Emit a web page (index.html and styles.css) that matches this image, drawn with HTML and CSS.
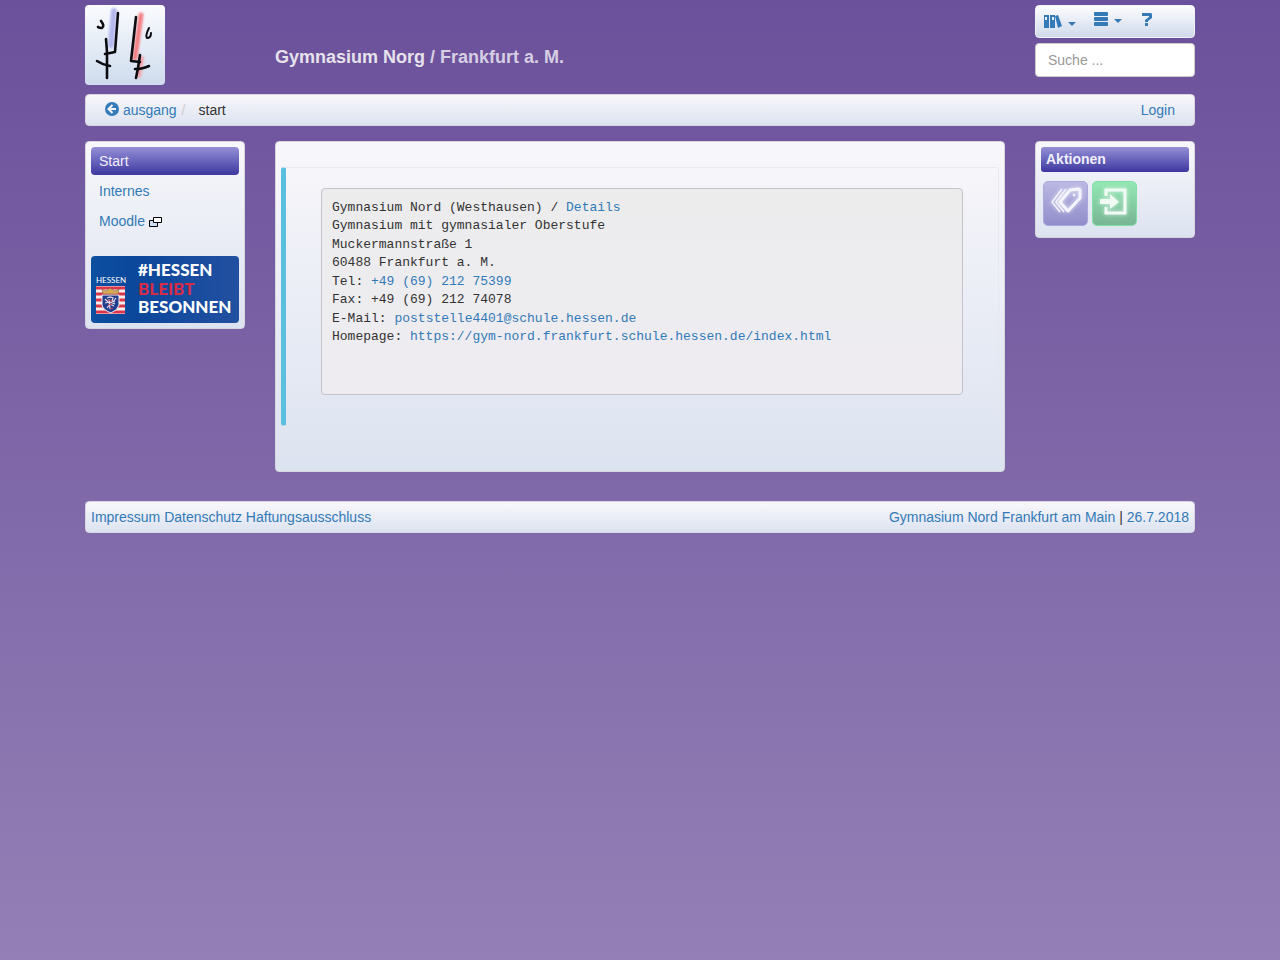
FILE: index.html
```html
<!DOCTYPE html>
<html lang="de">

<head>
  <meta charset="UTF-8">
  <meta name="viewport" content="width=device-width, initial-scale=1.0">
  <title>Gymnasium Nord / Frankfurt a. M.</title>
  <link rel="stylesheet" href="styles.css">
</head>

<body>
  <div class="container">
    <header class="row header">
      <div class="side">
        <a class="logo" href="#" aria-label="Startseite">
          <svg viewBox="0 0 80 80" width="80" height="80" fill="none" stroke-linecap="round" stroke-linejoin="round">
            <defs>
              <filter id="soft" x="-100%" y="-20%" width="300%" height="140%"><feGaussianBlur stdDeviation="1.2"/></filter>
            </defs>
            <g filter="url(#soft)">
              <path d="M29 6 L26 40" stroke="#b5b8ee" stroke-width="6"/>
              <path d="M56 10 L50 53" stroke="#f27f84" stroke-width="5"/>
              <path d="M57 53 L54 71" stroke="#f6a3a8" stroke-width="4"/>
            </g>
            <g stroke="#0b0b10" stroke-width="2.6">
              <path d="M33 8 L30 47 L20 49"/>
              <path d="M21 34 L22 47 L22 73"/>
              <path d="M12 56 Q18 60 25 61"/>
              <path d="M51 12 L46 56 L55 57"/>
              <path d="M55 50 L53 63 L51 73"/>
              <path d="M50 64 Q58 64 64 61"/>
              <path d="M16 16 Q20 21 17 23 Q14 23 13 22"/>
              <path d="M64 23 Q60 31 62 33 Q66 33 66 28" stroke-width="2"/>
            </g>
          </svg>
        </a>
      </div>
      <h1 class="title">Gymnasium Norg <span>/ Frankfurt a. M.</span></h1>
      <div class="side tools">
        <nav class="box toolbar">
          <button type="button" aria-label="Bibliothek">
            <svg viewBox="0 0 18 13" width="18" height="13" fill="#337ab7"><path fill-rule="evenodd" d="M0 0h5v13H0zM1 2h2v3H1zM6 0h5v13H6zM8 2h2v3H8z"/><path d="M11 1l3-1 4 11-4 2z"/></svg>
            <i class="caret"></i>
          </button>
          <button type="button" aria-label="Menü">
            <svg viewBox="0 0 14 14" width="14" height="14" fill="#337ab7"><rect width="14" height="4" rx="1"/><rect y="5" width="14" height="4" rx="1"/><rect y="10" width="14" height="4" rx="1"/></svg>
            <i class="caret"></i>
          </button>
          <button type="button" aria-label="Hilfe">
            <svg viewBox="0 0 10 14" width="10" height="14" fill="#337ab7"><path d="M0 1h9l1 1v4L6 9v1H3V8l4-3V4H0zM3 11h3v3H3z"/></svg>
          </button>
        </nav>
        <input class="search" type="text" placeholder="Suche ..." aria-label="Suche">
      </div>
    </header>

    <nav class="box bar breadcrumb">
      <div>
        <a href="#"><svg viewBox="0 0 14 14" width="14" height="14"><circle cx="7" cy="7" r="7" fill="#337ab7"/><path d="M11 7H4M7.5 3L3.500 7l4 4" fill="none" stroke="#f3f3f9" stroke-width="2"/></svg> ausgang</a><span class="sep">/</span><span>start</span>
      </div>
      <a href="#">Login</a>
    </nav>

    <div class="row content">
      <aside class="side box">
        <ul class="menu">
          <li><a class="active" href="#">Start</a></li>
          <li><a href="#">Internes</a></li>
          <li><a href="#">Moodle
            <svg viewBox="0 0 13 10" width="13" height="10" stroke="#000"><path d="M.5 3.500h8v6h-8z" fill="#cfdcf5"/><path d="M4.500 .5h8v5h-8z" fill="#fff"/></svg></a></li>
        </ul>
        <a class="banner" href="#">
          <svg viewBox="0 0 148 67" font-family="Lato, sans-serif">
            <defs>
              <linearGradient id="blue"><stop offset="0" stop-color="#0d4fa0"/><stop offset=".3" stop-color="#0b479b"/><stop offset="1" stop-color="#2350a0"/></linearGradient>
            </defs>
            <rect width="148" height="67" fill="url(#blue)"/>
            <text x="5" y="27" font-size="8" fill="#fff">HESSEN</text>
            <rect x="5" y="30" width="29" height="28" fill="#f4eeee"/>
            <path d="M5 32h29M5 38h29M5 44h29M5 50h29M5 56h29" stroke="#d9364a" stroke-width="3"/>
            <path d="M11 39h17v10q-1 5-8 8-8-3-9-8z" fill="#203e8d" stroke="#f2eef3"/>
            <path d="M12 38l-1-5 4 2 4-3 5 3 4-2-1 5z" fill="#d9a957" stroke="#76513c" stroke-width=".5"/>
            <path d="M16 42l3-1 3 1-1 3 3 1M14 47l5-1 5 2M16 52l3-4 4 2M18 43l1 10M14 43l3 3M25 42l-3 4" fill="none" stroke="#e9d9e4" stroke-width="1.200"/>
            <path d="M17 44l4 1M17 49l4-1M19 53l3-1" stroke="#cf3d50"/>
            <g font-size="17" font-weight="900">
              <text x="47" y="20" fill="#fff">#HESSEN</text>
              <text x="47" y="39" fill="#d62d46">BLEIBT</text>
              <text x="47" y="57" fill="#fff">BESONNEN</text>
            </g>
          </svg>
        </a>
      </aside>

      <main class="box main">
        <div class="callout">
          <pre>Gymnasium Nord (Westhausen) / <a href="#">Details</a>
Gymnasium mit gymnasialer Oberstufe
Muckermannstraße 1
60488 Frankfurt a. M.
Tel: <a href="#">+49 (69) 212 75399</a>
Fax: +49 (69) 212 74078
E-Mail: <a href="#">poststelle4401@schule.hessen.de</a>
Homepage: <a href="#">https://gym-nord.frankfurt.schule.hessen.de/index.html</a>


</pre>
        </div>
      </main>

      <aside class="side box">
        <h2 class="heading">Aktionen</h2>
        <div class="actions">
          <button class="tags" type="button" aria-label="Tags">
            <svg viewBox="0 0 43 43" width="43" height="43" fill="none" stroke="#f4f4fd"><path d="M16 20L26 8l9-1 1 1v8L24 29z" stroke-width="3" stroke-linejoin="round"/><path d="M22 7L12 20l8 10M18 7L8 20l8 10" stroke-width="1.500"/><circle cx="30" cy="13" r="1" fill="#f4f4fd"/></svg>
          </button>
          <button class="enter" type="button" aria-label="Anmelden">
            <svg viewBox="0 0 43 43" width="43" height="43"><path d="M13 14V8h19v23H13v-6" fill="none" stroke="#f1fbf5" stroke-width="3"/><path d="M7 17h10v-5l9 8-9 7v-5H7z" fill="#f1fbf5"/></svg>
          </button>
        </div>
      </aside>
    </div>

    <footer class="box bar">
      <div><a href="#">Impressum</a> <a href="#">Datenschutz</a> <a href="#">Haftungsausschluss</a></div>
      <div><a href="#">Gymnasium Nord Frankfurt am Main</a> | <a href="#">26.7.2018</a></div>
    </footer>
  </div>
</body>

</html>
```
FILE: styles.css
```css
* {
  box-sizing: border-box;
}
html {
  min-height: 100%;
  background: linear-gradient(#6b509b, #9480b6);
}
body {
  margin: 0;
  font: 14px/20px "Liberation Sans", Arial, sans-serif;
  color: #333;
}
a {
  color: #337ab7;
  text-decoration: none;
}
button {
  font: inherit;
  cursor: pointer;
}
.container {
  max-width: 1140px;
  margin: 0 auto;
  padding: 5px 15px;
}
.row {
  display: grid;
  grid-template-columns: 160px 1fr 160px;
  gap: 30px;
  align-items: start;
}
.box {
  padding: 5px;
  border: 1px solid #d8d5df;
  border-radius: 4px;
  background: linear-gradient(#f8f7fb, #dce3f0);
}

/* header */
.header {
  min-height: 80px;
}
.logo {
  display: block;
  width: 80px;
  height: 80px;
  border-radius: 4px;
  background: linear-gradient(#fafbfe, #cfdcee);
}
.logo svg {
  display: block;
}
.title {
  margin: 0;
  padding-top: 42px;
  font-size: 18px;
  line-height: 20px;
  color: #e6e2ec;
}
.title span {
  color: #d6cfe3;
}
.tools {
  display: flex;
  flex-direction: column;
  gap: 5px;
}
.toolbar {
  display: flex;
  gap: 18px;
  height: 33px;
  padding: 0 8px;
  border-color: #f0f2f8;
  background: linear-gradient(#fcfcfe, #d0daeb);
}
.toolbar button {
  display: flex;
  align-items: center;
  gap: 6px;
  padding: 0;
  border: 0;
  background: none;
}
.toolbar button:last-child {
  padding-left: 2px;
}
.toolbar button:not(:first-child) {
  padding-bottom: 6px;
}
.caret {
  margin-top: 4px;
  border-top: 4px solid #337ab7;
  border-left: 4px solid transparent;
  border-right: 4px solid transparent;
}
.search {
  width: 100%;
  height: 34px;
  padding: 6px 12px;
  border: 1px solid #ccc;
  border-radius: 4px;
  font: inherit;
  background: #fff;
}
.search::placeholder {
  color: #999;
}

/* breadcrumb and footer */
.bar {
  display: flex;
  justify-content: space-between;
}
.breadcrumb {
  margin: 9px 0 15px;
  padding: 5px 19px;
}
.breadcrumb svg {
  vertical-align: -1px;
}
.sep {
  padding: 0 13px 0 5px;
  color: #ccc;
}

/* left menu */
.menu {
  margin: 0 0 21px;
  padding: 0;
  list-style: none;
}
.menu li {
  margin-bottom: 2px;
}
.menu li:last-child {
  margin-bottom: 0;
}
.menu a {
  display: block;
  padding: 4px 8px;
  border-radius: 4px;
}
.menu svg {
  vertical-align: -1px;
}
.menu .active,
.heading {
  color: #f1effa;
  background: linear-gradient(#9490d6, #3d37a0);
}
.banner,
.banner svg {
  display: block;
  border-radius: 4px;
}

/* content */
.content {
  margin-bottom: 29px;
}
.main {
  padding: 25px 5px 45px;
}
.callout {
  padding: 20px 35px 30px;
  border: 1px solid rgba(230, 230, 235, .7);
  border-left: 5px solid #5bc0de;
  border-radius: 3px;
}
pre {
  margin: 0;
  padding: 10px;
  border: 1px solid #c4c3ca;
  border-radius: 4px;
  font: 13px/1.42 "Liberation Mono", "Courier New", monospace;
  white-space: pre-wrap;
  background: linear-gradient(#ececed, #eeecf1);
}

/* actions */
.heading {
  margin: 0 0 9px;
  padding: 2px 5px 3px;
  border-radius: 3px;
  font-size: 14px;
  line-height: 20px;
}
.actions {
  display: flex;
  gap: 4px;
  padding: 0 2px 6px;
}
.actions button {
  padding: 0;
  border: 1px solid #aaa7dc;
  border-radius: 5px;
  background: linear-gradient(#bbb8e3, #908dcb);
}
.actions .enter {
  border-color: #83dfa5;
  background: linear-gradient(#93e8b3, #78b594);
}
.actions svg {
  display: block;
  filter: drop-shadow(0 0 2px rgba(255, 255, 255, .7));
}
```
